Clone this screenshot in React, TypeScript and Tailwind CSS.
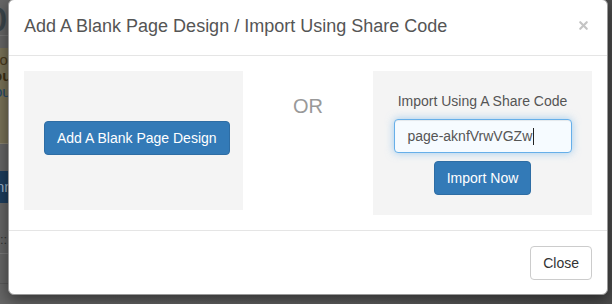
import { X } from 'lucide-react';

/**
 * Page behind the backdrop (only a sliver shows on the left)
 */
const PageBehind = () => {
  return (
    <div className="flex flex-col w-[40px] h-full bg-[#676767] text-[0px]">
      <div className="h-[36px] border-b border-[#777] overflow-hidden">
        <span className="block -ml-[18px] -mt-[12px] text-[46px] leading-[56px] text-[#3c464b]">og</span>
      </div>
      <div className="mt-[12px] h-[96px] bg-[#7a7358] border-b border-[#8a8470] pt-[4px] text-[15px] leading-[16px] overflow-hidden">
        <div className="-ml-[8px] text-[#4a3a1c]">you</div>
        <div className="-ml-[7px] text-[#3d2f14] font-bold">our</div>
        <div className="-ml-[6px] text-[#24486b]">out</div>
      </div>
      <div className="mt-[27px] h-[32px] bg-[#1d3e5e] text-[#9fb4c8] text-[15px] leading-[32px] overflow-hidden">
        <span className="-ml-[4px]">nn</span>
      </div>
      <div className="mt-[26px] h-[22px] text-[#333] text-[13px] leading-[22px]">::</div>
      <div className="border-b border-[#7a7a7a] mt-[2px]" />
      <div className="flex-1 border-b border-[#5a5a5a] mb-[20px]" />
    </div>
  );
};

const App = () => {
  return (
    <div className="relative w-[612px] h-[304px] overflow-hidden bg-[linear-gradient(to_right,#676767_0,#5f5f5f_60%,#4c4c4c_100%)] font-['Liberation_Sans',Arial,sans-serif]">
      <PageBehind />

      {/* modal */}
      <div className="absolute left-[8px] top-[-1px] w-[600px] bg-white border border-[#9a9a9a] rounded-[6px] shadow-[0_5px_15px_rgba(0,0,0,0.5)]">
        <div className="h-[56px] border-b border-[#e5e5e5] px-[15px] pt-[13px] flex justify-between">
          <h4 className="text-[18px] leading-[26px] text-[#555]">
            Add A Blank Page Design / Import Using Share Code
          </h4>
          <button className="mt-[4px] mr-[2px] h-[16px] text-[#c4c4c4]">
            <X size={13} strokeWidth={4} />
          </button>
        </div>

        <div className="p-[15px] flex items-start gap-[30px]">
          <div className="w-[219px] h-[139px] bg-[#f4f4f4] pl-[20px] pt-[50px]">
            <button className="h-[34px] px-[12px] rounded-[4px] bg-[#337ab7] border border-[#2e6da4] text-white text-[14px] whitespace-nowrap">
              Add A Blank Page Design
            </button>
          </div>

          <div className="flex-1 pt-[24px] text-center text-[20px] leading-[22px] text-[#999]">
            OR
          </div>

          <div className="w-[219px] bg-[#f4f4f4] py-[20px] flex flex-col items-center">
            <label className="text-[14px] leading-[20px] text-[#555]">
              Import Using A Share Code
            </label>
            <div className="mt-[8px] w-[178px] h-[34px] rounded-[4px] border border-[#66afe9] bg-[#f6fbff] shadow-[inset_0_1px_1px_rgba(0,0,0,0.075),0_0_8px_rgba(102,175,233,0.6)] pl-[13px] flex items-center text-[14px] text-[#555]">
              page-aknfVrwVGZw
              <span className="ml-[1px] w-[1px] h-[17px] bg-[#222]" />
            </div>
            <button className="mt-[8px] h-[34px] px-[12px] rounded-[4px] bg-[#337ab7] border border-[#2e6da4] text-white text-[14px]">
              Import Now
            </button>
          </div>
        </div>

        <div className="border-t border-[#e5e5e5] pt-[15px] pb-[14px] px-[15px] flex justify-end">
          <button className="h-[34px] px-[12px] rounded-[4px] bg-white border border-[#ccc] text-[#333] text-[14px]">
            Close
          </button>
        </div>
      </div>
    </div>
  );
};

export default App;
